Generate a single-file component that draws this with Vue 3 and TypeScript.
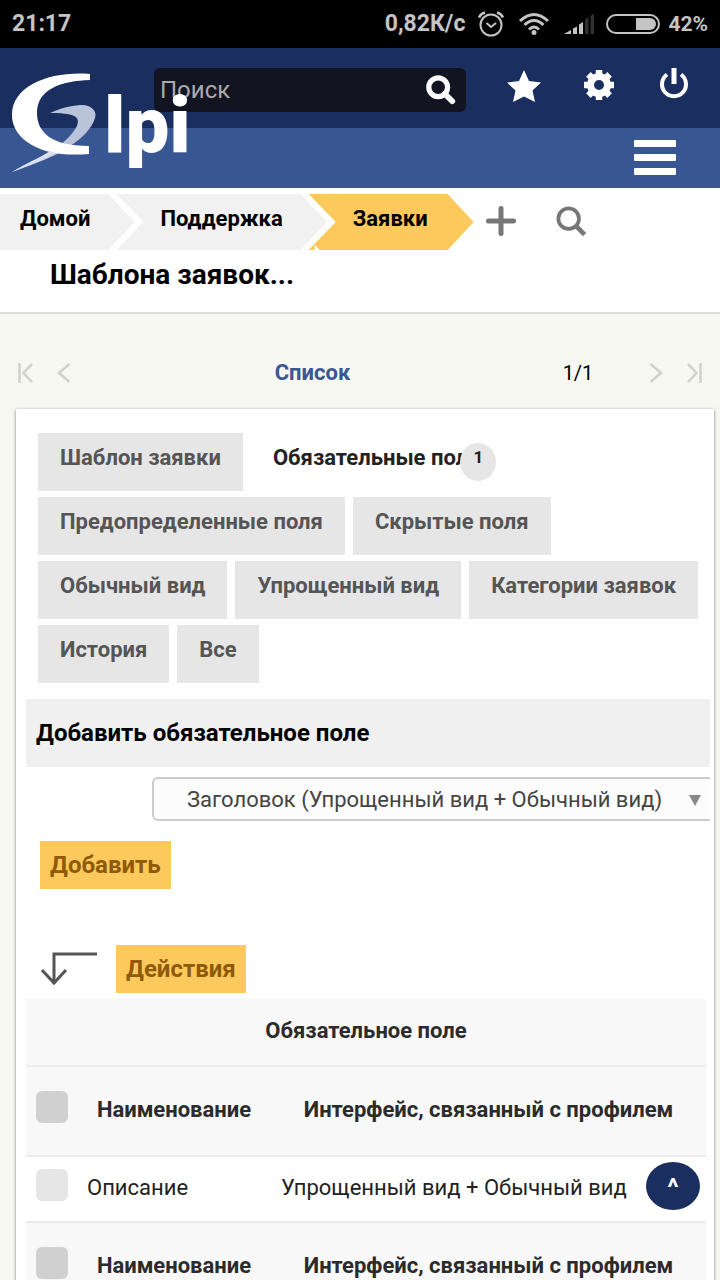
<script setup lang="ts">
import { ref } from 'vue'

interface Tab {
  label: string
  count?: number
}

interface Row {
  heading: boolean
  name: string
  profile: string
}

const query = ref('')
const field = ref('title')
const activeTab = ref(1)

const crumbs: string[] = ['Домой', 'Поддержка', 'Заявки']

const tabs: Tab[] = [
  { label: 'Шаблон заявки' },
  { label: 'Обязательные поля', count: 1 },
  { label: 'Предопределенные поля' },
  { label: 'Скрытые поля' },
  { label: 'Обычный вид' },
  { label: 'Упрощенный вид' },
  { label: 'Категории заявок' },
  { label: 'История' },
  { label: 'Все' },
]

const rows: Row[] = [
  { heading: true, name: 'Наименование', profile: 'Интерфейс, связанный с профилем' },
  { heading: false, name: 'Описание', profile: 'Упрощенный вид + Обычный вид' },
  { heading: true, name: 'Наименование', profile: 'Интерфейс, связанный с профилем' },
]
</script>

<template>
  <div class="page">
    <div class="status">
      <span class="clock">21:17</span>
      <span class="speed">0,82К/с</span>
      <svg class="s-alarm" width="28" height="28" viewBox="0 0 28 28" fill="none" stroke="#c4c4c4" stroke-width="2">
        <circle cx="14" cy="15" r="10.5" />
        <path d="M9.5 13 14 17l5-4" />
        <path d="M2 7.500Q4 3.500 8 2.500M26 7.500Q24 3.500 20 2.500" stroke-width="2.500" />
      </svg>
      <svg class="s-wifi" width="32" height="24" viewBox="0 0 32 24" fill="none" stroke="#c4c4c4" stroke-width="3">
        <path d="M2 9Q16-4 30 9" />
        <path d="M6.500 13Q16 4 25.500 13" />
        <path d="M11 17.500Q16 12.500 21 17.500" />
        <circle cx="16" cy="20.500" r="2.500" fill="#c4c4c4" stroke="none" />
      </svg>
      <svg class="s-signal" width="30" height="22" viewBox="0 0 30 22" fill="#c4c4c4">
        <path d="M0 21 7 17v4zM9 15.500l4-2V21H9zM15 11.500l4-2.500v12h-4z" />
        <path d="M21 6.500 24.500 4v17H21zM26.500 3 30 .5V21h-3.500z" fill="#303030" />
      </svg>
      <svg class="s-battery" width="54" height="20" viewBox="0 0 54 20" fill="none">
        <rect x="1" y="1" width="52" height="18" rx="9" stroke="#c4c4c4" stroke-width="2" />
        <path d="M30 4h14a6 6 0 0 1 0 12H30z" fill="#c4c4c4" />
      </svg>
      <span class="percent">42%</span>
    </div>

    <header class="header">
      <a class="logo" href="#" aria-label="Glpi">
        <svg class="logo-mark" width="86" height="102" viewBox="0 0 86 102">
          <path d="M39 41C52 35 64 33 72 33 82 34 86 40 84 46 81 57 70 67 59 74 50 82 24 92 1 100 16 91 32 85 39 80 50 73 60 65 66 54 70 44 62 41 39 41Z" fill="#b9c3da" />
          <path d="M79 2v6C50 9 26 17 26 41 26 60 40 74 78 74v8C66 83 50 83 39 80 18 75 1 62 1 43 1 13 40-1 79 2Z" fill="#fff" />
          <path d="M1 100C18 90 30 85 39 79l6 2C34 88 18 93 1 100Z" fill="#dbe1ee" />
        </svg>
        <span class="logo-text">lpi</span>
      </a>
      <div class="topbar">
        <form class="search" @submit.prevent>
          <input v-model="query" type="text" placeholder="Поиск" aria-label="Поиск" />
          <button type="submit" aria-label="Искать">
            <svg width="30" height="30" viewBox="0 0 32 32" fill="none" stroke="#fff">
              <circle cx="13" cy="13" r="10" stroke-width="5.500" />
              <path d="m20 20 8 8" stroke-width="6" stroke-linecap="round" />
            </svg>
          </button>
        </form>
        <nav class="tools">
          <a href="#" aria-label="Закладки">
            <svg width="34" height="34" viewBox="0 0 34 34" fill="#fff">
              <path d="m17 1 5 11 12 1.500-8.500 8L28 33l-11-5.500L6 33l2.500-11.500L0 13.500 12 12z" />
            </svg>
          </a>
          <a href="#" aria-label="Настройки">
            <svg width="32" height="34" viewBox="0 0 32 34" fill="none" stroke="#fff">
              <circle cx="16" cy="16" r="8.500" stroke-width="7" />
              <path d="M16 1v5M16 26v5M1 16h5M26 16h5M5.400 5.400 9 9M23 23l3.600 3.600M26.600 5.400 23 9M9 23l-3.600 3.600" stroke-width="6.500" />
            </svg>
          </a>
          <a href="#" aria-label="Выход">
            <svg width="32" height="36" viewBox="0 0 32 36" fill="none" stroke="#fff" stroke-width="4">
              <path d="M9 6.500a12 12 0 1 0 14 0" />
              <path d="M16 0v16" stroke-width="5" />
            </svg>
          </a>
        </nav>
      </div>
      <div class="menubar">
        <button type="button" aria-label="Меню">
          <svg width="42" height="35" viewBox="0 0 42 35" fill="#fff">
            <rect y="0" width="42" height="7" rx="1" />
            <rect y="14" width="42" height="7" rx="1" />
            <rect y="28" width="42" height="7" rx="1" />
          </svg>
        </button>
      </div>
    </header>

    <section class="heading">
      <nav class="crumbs">
        <a v-for="(crumb, i) in crumbs" :key="crumb" href="#" :class="{ current: i === crumbs.length - 1 }">{{ crumb }}</a>
        <button type="button" aria-label="Добавить заявку">
          <svg width="30" height="30" viewBox="0 0 30 30" fill="none" stroke="#777" stroke-width="5" stroke-linecap="round">
            <path d="M15 2.500v25M2.500 15h25" />
          </svg>
        </button>
        <button type="button" aria-label="Найти заявку">
          <svg width="30" height="30" viewBox="0 0 32 32" fill="none" stroke="#777" stroke-width="4">
            <circle cx="13.500" cy="13.500" r="11" />
            <path d="m21 21 9.500 9.500" stroke-width="5" />
          </svg>
        </button>
      </nav>
      <h1>Шаблона заявок...</h1>
    </section>

    <nav class="pager">
      <div class="arrows">
        <button type="button" aria-label="Первая">
          <svg width="15" height="20" viewBox="0 0 15 20" fill="none" stroke="#d0d1cd" stroke-width="2.500">
            <path d="M1.500 0v20M14 1 5.500 10l8.500 9" />
          </svg>
        </button>
        <button type="button" aria-label="Предыдущая">
          <svg width="14" height="20" viewBox="0 0 14 20" fill="none" stroke="#d0d1cd" stroke-width="2.500">
            <path d="M12.500 1 2 10l10.500 9" />
          </svg>
        </button>
      </div>
      <a class="list" href="#">Список</a>
      <span class="position">1/1</span>
      <div class="arrows">
        <button type="button" aria-label="Следующая">
          <svg width="14" height="20" viewBox="0 0 14 20" fill="none" stroke="#d0d1cd" stroke-width="2.500">
            <path d="m1.500 1 10.500 9-10.500 9" />
          </svg>
        </button>
        <button type="button" aria-label="Последняя">
          <svg width="15" height="20" viewBox="0 0 15 20" fill="none" stroke="#d0d1cd" stroke-width="2.500">
            <path d="M13.500 0v20M1 1l8.500 9L1 19" />
          </svg>
        </button>
      </div>
    </nav>

    <main class="card">
      <div class="tabs" role="tablist">
        <button
          v-for="(tab, i) in tabs"
          :key="tab.label"
          type="button"
          role="tab"
          :aria-selected="activeTab === i"
          :class="{ active: activeTab === i }"
          @click="activeTab = i"
        >
          {{ tab.label }}<sup v-if="tab.count" class="badge">{{ tab.count }}</sup>
        </button>
      </div>

      <form class="add" @submit.prevent>
        <h2><label for="field">Добавить обязательное поле</label></h2>
        <div class="select-wrap">
          <select id="field" v-model="field">
            <option value="title">Заголовок (Упрощенный вид + Обычный вид)</option>
          </select>
          <svg width="12" height="11" viewBox="0 0 12 11" fill="#888"><path d="M0 0h12L6 11z" /></svg>
        </div>
        <button class="action" type="submit">Добавить</button>
      </form>

      <div class="bulk">
        <svg width="58" height="36" viewBox="0 0 58 36" fill="none" stroke="#555" stroke-width="3">
          <path d="M57 3H14v29" />
          <path d="m2 19 12 13 12-13" />
        </svg>
        <button class="action" type="button">Действия</button>
      </div>

      <table>
        <colgroup>
          <col class="c-check" />
          <col class="c-name" />
          <col />
        </colgroup>
        <thead>
          <tr class="caption"><th colspan="3">Обязательное поле</th></tr>
        </thead>
        <tbody>
          <tr v-for="(row, i) in rows" :key="i" :class="{ sub: row.heading }">
            <component :is="row.heading ? 'th' : 'td'" class="check"><input type="checkbox" :aria-label="row.heading ? 'Выбрать все' : row.name" /></component>
            <component :is="row.heading ? 'th' : 'td'">{{ row.name }}</component>
            <component :is="row.heading ? 'th' : 'td'">{{ row.profile }}</component>
          </tr>
        </tbody>
      </table>
    </main>

    <a class="to-top" href="#" aria-label="Наверх">^</a>
  </div>
</template>

<style>
html,
body {
  margin: 0;
  background: #f5f7f0;
  scrollbar-width: none;
}
</style>

<style scoped>
.page {
  height: 100vh;
  overflow: hidden auto;
  scrollbar-width: none;
  font-family: Roboto, "Noto Sans", sans-serif;
  font-size: 22px;
  line-height: 28px;
  color: #000;
}
* {
  box-sizing: border-box;
}
button,
input,
select {
  font: inherit;
  margin: 0;
  border: 0;
  padding: 0;
  background: none;
  color: inherit;
}
svg {
  display: block;
  flex: none;
}
a {
  color: inherit;
  text-decoration: none;
}

.status {
  display: flex;
  align-items: center;
  height: 48px;
  padding: 0 12px;
  background: #000;
  color: #c4c4c4;
  font-weight: 700;
}
.clock {
  margin-right: auto;
  font-size: 23px;
}
.speed {
  font-size: 23px;
}
.s-alarm {
  margin-left: 12px;
}
.s-wifi {
  margin-left: 13px;
}
.s-signal {
  margin-left: 14px;
}
.s-battery {
  margin-left: 12px;
}
.percent {
  margin-left: 8px;
  font-size: 21px;
}

.header {
  position: relative;
}
.logo {
  position: absolute;
  top: 24px;
  left: 11px;
  z-index: 1;
  display: flex;
  color: #fff;
}
.logo-mark {
  margin-right: 7px;
}
.logo-text {
  height: 100px;
  font-size: 78px;
  font-weight: 900;
  line-height: 108px;
}
.topbar {
  display: flex;
  height: 80px;
  padding: 20px 9px 0 154px;
  background: #1a2f60;
}
.search {
  display: flex;
  flex: 1;
  align-items: center;
  height: 44px;
  min-width: 0;
  padding: 0 10px 0 6px;
  border-radius: 6px;
  background: #131422;
}
.search input {
  flex: 1;
  min-width: 0;
  outline: 0;
  color: #aaa;
  font-size: 24px;
}
.search input::placeholder {
  color: #aaa;
  opacity: 1;
}
.tools {
  display: flex;
  margin-left: 20px;
}
.tools a {
  display: flex;
  justify-content: center;
  align-items: center;
  width: 75px;
  height: 36px;
}
.menubar {
  display: flex;
  align-items: center;
  justify-content: flex-end;
  height: 60px;
  padding: 0 44px 2px;
  background: #385691;
}

.heading {
  padding: 6px 0 20px;
  border-bottom: 2px solid #dcddd9;
  background: #fff;
}
.crumbs {
  display: flex;
  align-items: center;
}
.crumbs a {
  height: 56px;
  margin-left: -18px;
  padding: 0 44px;
  background: #f1f1f1;
  font-weight: 700;
  line-height: 50px;
  clip-path: polygon(0 0, calc(100% - 26px) 0, 100% 50%, calc(100% - 26px) 100%, 0 100%, 27px 50%);
}
.crumbs a:first-child {
  margin-left: 0;
  padding-left: 20px;
  clip-path: polygon(0 0, calc(100% - 26px) 0, 100% 50%, calc(100% - 26px) 100%, 0 100%);
}
.crumbs a.current {
  padding-right: 46px;
  background: #fec95c;
  clip-path: polygon(0 0, calc(100% - 26px) 0, 100% 50%, calc(100% - 26px) 100%, 11px 100%, 6px calc(100% - 5px), 6px 100%, 0 100%, 27px 50%);
}
.crumbs button {
  margin: 0 28px 0 12px;
  padding-bottom: 2px;
}
h1 {
  margin: 0;
  padding: 8px 50px 0;
  font-size: 28px;
  font-weight: 700;
  line-height: 34px;
}

.pager {
  display: grid;
  grid-template-columns: 100px 1fr 142px 53px;
  align-items: center;
  padding: 45px 18px 22px;
}
.arrows {
  display: flex;
  gap: 24px;
}
.list {
  color: #3a5693;
  font-weight: 700;
  text-align: center;
}
.position {
  font-size: 20px;
  text-align: center;
}

.card {
  margin: 0 6px 0 16px;
  padding: 24px 4px 40px 10px;
  background: #fff;
  box-shadow: 0 1px 3px rgba(0, 0, 0, 0.5);
}
.tabs {
  display: flex;
  flex-wrap: wrap;
  gap: 6px 8px;
  padding: 0 6px 16px 12px;
}
.tabs button {
  position: relative;
  height: 58px;
  padding: 0 22px 8px;
  background: #e6e6e6;
  color: #555;
  font-weight: 700;
  white-space: nowrap;
}
.tabs button.active {
  background: #fff;
  color: #222;
}
.badge {
  position: absolute;
  top: 10px;
  right: 6px;
  width: 36px;
  height: 38px;
  border-radius: 50%;
  background: #e6e6e6;
  font-size: 17px;
  line-height: 28px;
}

h2 {
  margin: 0;
  padding: 20px 10px;
  background: #f0f0f0;
  font-size: 24px;
  font-weight: 700;
  line-height: 28px;
}
.select-wrap {
  position: relative;
  margin: 10px 0 20px 126px;
}
.select-wrap svg {
  position: absolute;
  top: 18px;
  right: 9px;
  pointer-events: none;
}
select {
  display: block;
  width: 100%;
  height: 44px;
  padding: 2px 33px 0;
  border: 2px solid #ccc;
  border-right: 0;
  border-radius: 6px 0 0 6px;
  background: #fcfcfc;
  color: #444;
  appearance: none;
}
.action {
  height: 48px;
  padding: 0 10px;
  background: #fec95c;
  color: #8f5a0a;
  font-size: 24px;
  font-weight: 700;
}
.add .action {
  margin-left: 14px;
}
.bulk {
  display: flex;
  align-items: center;
  gap: 18px;
  padding: 56px 14px 6px;
}

table {
  width: calc(100% - 4px);
  border-spacing: 0;
  table-layout: fixed;
  color: #222;
}
.c-check {
  width: 51px;
}
.c-name {
  width: 194px;
}
th,
td {
  height: 66px;
  padding: 0 10px 2px;
  border-bottom: 2px solid #ececec;
  text-align: left;
  font-weight: 400;
  white-space: nowrap;
}
th {
  background: #f8f8f8;
  color: #2b2b2b;
  font-weight: 700;
  text-align: center;
}
.caption th {
  height: 68px;
}
.sub th {
  height: 90px;
}
.check input {
  display: block;
  width: 32px;
  height: 32px;
  margin-bottom: 6px;
  border-radius: 6px;
  background: #e6e6e6;
  appearance: none;
}
.sub .check input {
  background: #d0d0d0;
}

.to-top {
  position: fixed;
  right: 20px;
  bottom: 70px;
  width: 54px;
  height: 48px;
  border-radius: 50%;
  background: #1a2f60;
  color: #fff;
  font-size: 26px;
  font-weight: 700;
  line-height: 50px;
  text-align: center;
}
</style>
